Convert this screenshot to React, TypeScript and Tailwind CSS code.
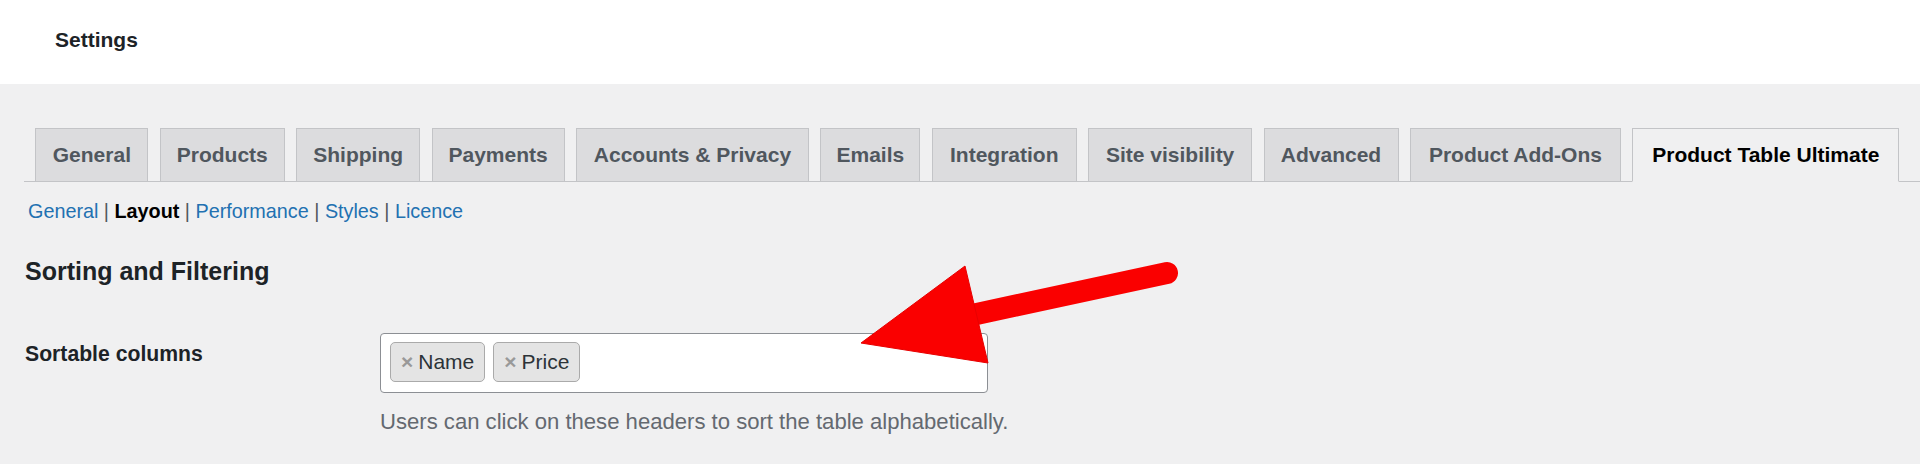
const tabs: { label: string; w: string }[] = [
  { label: "General", w: "w-[113px]" },
  { label: "Products", w: "w-[125px]" },
  { label: "Shipping", w: "w-[124px]" },
  { label: "Payments", w: "w-[133px]" },
  { label: "Accounts & Privacy", w: "w-[233px]" },
  { label: "Emails", w: "w-[100px]" },
  { label: "Integration", w: "w-[145px]" },
  { label: "Site visibility", w: "w-[164px]" },
  { label: "Advanced", w: "w-[135px]" },
  { label: "Product Add-Ons", w: "w-[211px]" },
  { label: "Product Table Ultimate", w: "w-[267px]" },
];

const subLinks = ["General", "Layout", "Performance", "Styles", "Licence"];

function Chip({ label }: { label: string }) {
  return (
    <span className="flex h-[40px] items-center rounded-[5px] border border-[#aaaaaa] bg-[#e4e4e4] px-[10px] text-[21px] leading-[38px] text-[#2c3338]">
      <span className="mr-[5px] font-bold text-[#999999]">×</span>
      {label}
    </span>
  );
}

// red annotation arrow drawn over the page
function Arrow() {
  return (
    <svg
      className="pointer-events-none absolute left-0 top-0"
      width="1920"
      height="464"
      viewBox="0 0 1920 464"
    >
      <line x1="1167" y1="273" x2="972" y2="315" stroke="#fa0000" strokeWidth="22" strokeLinecap="round" />
      <polygon points="861,343 965,266 988,363" fill="#fa0000" stroke="#e80000" strokeWidth="1" strokeLinejoin="round" />
    </svg>
  );
}

export default function App() {
  return (
    <div className="relative min-h-screen bg-[#f0f0f1] font-['Liberation_Sans',Arial,sans-serif] text-[#1d2327]">
      <header className="flex h-[84px] items-center bg-white pb-[6px] pl-[55px]">
        <h1 className="text-[21px] font-bold leading-none">Settings</h1>
      </header>

      <div className="pl-[24px]">
        <nav className="flex items-end border-b border-[#c3c4c7] pt-[44px]">
          {tabs.map((t, i) => {
            const active = i === tabs.length - 1;
            return (
              <span
                key={t.label}
                className={`-mb-px ml-[11.4px] border py-2 text-center text-[21px] font-bold leading-[36px] whitespace-nowrap ${t.w} ${
                  active
                    ? "border-[#c3c4c7] border-b-[#f0f0f1] bg-[#f0f0f1] text-black"
                    : "border-[#c3c4c7] bg-[#dcdcde] text-[#50575e]"
                }`}
              >
                {t.label}
              </span>
            );
          })}
        </nav>

        <div className="mt-[15px] pl-[4px] text-[19.8px] leading-[28px] text-[#50575e]">
          {subLinks.map((l, i) => (
            <span key={l}>
              {l === "Layout" ? (
                <span className="font-bold text-black">{l}</span>
              ) : (
                <span className="text-[#2271b1]">{l}</span>
              )}
              {i < subLinks.length - 1 && " | "}
            </span>
          ))}
        </div>

        <h2 className="mt-[30px] pl-px text-[25px] font-bold leading-[32px]">Sorting and Filtering</h2>

        <div className="mt-[46px] flex pl-px">
          <div className="w-[355px] pt-[7px] text-[21.2px] font-bold leading-[28px]">Sortable columns</div>
          <div>
            <div className="flex h-[60px] w-[608px] items-start gap-[8px] rounded-[4px] border border-[#8c8f94] bg-white pl-[9px] pt-[8px]">
              <Chip label="Name" />
              <Chip label="Price" />
            </div>
            <p className="mt-[15px] text-[22.1px] leading-[28px] text-[#646970]">
              Users can click on these headers to sort the table alphabetically.
            </p>
          </div>
        </div>
      </div>

      <Arrow />
    </div>
  );
}
